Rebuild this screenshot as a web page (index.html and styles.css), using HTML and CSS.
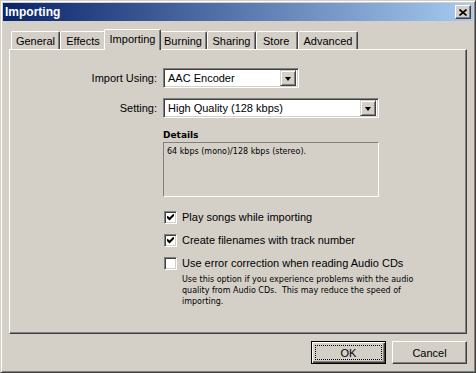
FILE: index.html
```html
<!DOCTYPE html>
<html lang="en">
<head>
    <meta charset="UTF-8">
    <title>Importing</title>
    <link rel="stylesheet" href="styles.css">
</head>
<body>
    <div class="window">
        <div class="titlebar">
            <span class="title">Importing</span>
            <span class="close">
                <svg width="8" height="7" viewBox="0 0 8 7"><path d="M0.5 0.5 L7.5 6.5 M7.5 0.5 L0.5 6.5" stroke="#000" stroke-width="1.6" fill="none"/></svg>
            </span>
        </div>

        <div class="content">
            <div class="tabs">
                <div class="tab w-general">General</div>
                <div class="tab w-effects">Effects</div>
                <div class="tab active">Importing</div>
                <div class="tab w-burning">Burning</div>
                <div class="tab w-sharing">Sharing</div>
                <div class="tab w-store">Store</div>
                <div class="tab w-advanced">Advanced</div>
            </div>

            <div class="panel">
                <div class="form">
                    <label class="label">Import Using:</label>
                    <div class="combo short">
                        <span class="combo-text">AAC Encoder</span>
                        <span class="combo-btn"><span class="arrow"></span></span>
                    </div>

                    <label class="label row-2">Setting:</label>
                    <div class="combo long row-2">
                        <span class="combo-text">High Quality (128 kbps)</span>
                        <span class="combo-btn"><span class="arrow"></span></span>
                    </div>
                </div>

                <div class="section">
                    <div class="details-title">Details</div>
                    <div class="details-box">64 kbps (mono)/128 kbps (stereo).</div>

                    <div class="check first">
                        <span class="box"><svg width="7" height="7" viewBox="0 0 7 7"><path d="M0 2.5 L2.5 5 L7 0.5" stroke="#000" stroke-width="2" fill="none"/></svg></span>
                        <span>Play songs while importing</span>
                    </div>
                    <div class="check">
                        <span class="box"><svg width="7" height="7" viewBox="0 0 7 7"><path d="M0 2.5 L2.5 5 L7 0.5" stroke="#000" stroke-width="2" fill="none"/></svg></span>
                        <span>Create filenames with track number</span>
                    </div>
                    <div class="check">
                        <span class="box"></span>
                        <span>Use error correction when reading Audio CDs</span>
                    </div>
                    <p class="hint">Use this option if you experience problems with the audio quality from Audio CDs.&nbsp; This may reduce the speed of importing.</p>
                </div>
            </div>

            <div class="buttons">
                <div class="btn default"><span class="focus">OK</span></div>
                <div class="btn">Cancel</div>
            </div>
        </div>
    </div>
</body>
</html>
```

FILE: styles.css
```css
body { margin: 0; background: #d4d0c8; font-family: 'Liberation Sans', Arial, sans-serif; font-size: 11px; color: #000; }
.window { width: 476px; height: 373px; box-sizing: border-box; background: #d4d0c8; border: 1px solid; border-color: #d4d0c8 #404040 #404040 #d4d0c8; box-shadow: inset 1px 1px #fff, inset -1px -1px #808080; padding: 2px; display: flex; flex-direction: column; }

.titlebar { height: 18px; flex-shrink: 0; background: linear-gradient(to right, #0a246a, #a6caf0); display: flex; align-items: center; justify-content: space-between; padding: 0 2px 0 2px; }
.title { color: #fff; font-weight: bold; font-size: 12px; }
.close { width: 16px; height: 14px; box-sizing: border-box; background: #d4d0c8; border: 1px solid; border-color: #fff #404040 #404040 #fff; box-shadow: inset -1px -1px #808080; display: flex; align-items: center; justify-content: center; }

.content { flex: 1; padding: 8px 6px 0; display: flex; flex-direction: column; }

.tabs { display: flex; align-items: flex-end; height: 20px; padding-left: 2px; }
.tab { height: 18px; box-sizing: border-box; border-top: 1px solid #fff; border-left: 1px solid #fff; border-right: 1px solid #404040; border-radius: 2px 2px 0 0; box-shadow: inset -1px 0 #808080; display: flex; align-items: center; justify-content: center; padding-top: 1px; background: #d4d0c8; }
.w-general { width: 49px; }
.w-effects { width: 46px; }
.w-burning { width: 48px; }
.w-sharing { width: 49px; }
.w-store { width: 42px; justify-content: flex-start; padding-left: 6px; }
.w-advanced { width: 60px; }
.tab.active { width: 57px; height: 21px; margin: 0 -2px -1px; position: relative; z-index: 1; padding-top: 0; padding-bottom: 3px; }

.panel { height: 285px; box-sizing: border-box; border: 1px solid; border-color: #fff #404040 #404040 #fff; box-shadow: inset -1px -1px #808080; padding-top: 18px; }

.form { display: grid; grid-template-columns: 147px auto; column-gap: 6px; row-gap: 10px; align-items: center; }
.label { text-align: right; }
.combo { height: 20px; box-sizing: border-box; background: #fff; border: 1px solid; border-color: #808080 #fff #fff #808080; box-shadow: inset 1px 1px #404040, inset -1px -1px #d4d0c8; display: flex; align-items: center; justify-content: space-between; padding: 2px; }
.combo.short { width: 136px; }
.combo.long { width: 216px; }
.combo-text { padding-left: 2px; }
.combo-btn { width: 16px; height: 16px; box-sizing: border-box; background: #d4d0c8; border: 1px solid; border-color: #d4d0c8 #404040 #404040 #d4d0c8; box-shadow: inset 1px 1px #fff, inset -1px -1px #808080; display: flex; align-items: center; justify-content: center; }
.arrow { width: 0; height: 0; border-left: 3.5px solid transparent; border-right: 3.5px solid transparent; border-top: 4px solid #000; margin-top: 1px; }

.section { padding-left: 153px; }
.details-title { font-family: 'DejaVu Sans', sans-serif; font-weight: bold; font-size: 9px; margin-top: 10px; height: 14px; line-height: 14px; }
.details-box { width: 216px; height: 55px; box-sizing: border-box; border: 1px solid; border-color: #808080 #fff #fff #808080; font-family: 'DejaVu Sans', sans-serif; font-size: 8px; padding: 4px 3px; }

.check { display: flex; align-items: center; gap: 5px; height: 16px; margin-top: 7px; padding-left: 1px; }
.check.first { margin-top: 12px; }
.box { width: 13px; height: 13px; box-sizing: border-box; background: #fff; border: 1px solid; border-color: #808080 #fff #fff #808080; box-shadow: inset 1px 1px #404040, inset -1px -1px #d4d0c8; display: flex; align-items: center; justify-content: center; }
.hint { margin: 3px 0 0 19px; width: 240px; font-family: 'DejaVu Sans', sans-serif; font-size: 8px; line-height: 11px; }

.buttons { display: flex; justify-content: flex-end; gap: 6px; margin-top: 7px; }
.btn { width: 75px; height: 23px; box-sizing: border-box; border: 1px solid; border-color: #fff #404040 #404040 #fff; box-shadow: inset -1px -1px #808080; display: flex; align-items: center; justify-content: center; }
.btn.default { border-color: #000; box-shadow: inset 1px 1px #fff, inset -1px -1px #404040, inset -2px -2px #808080; padding: 3px; }
.focus { flex: 1; align-self: stretch; border: 1px dotted #000; display: flex; align-items: center; justify-content: center; }
```
